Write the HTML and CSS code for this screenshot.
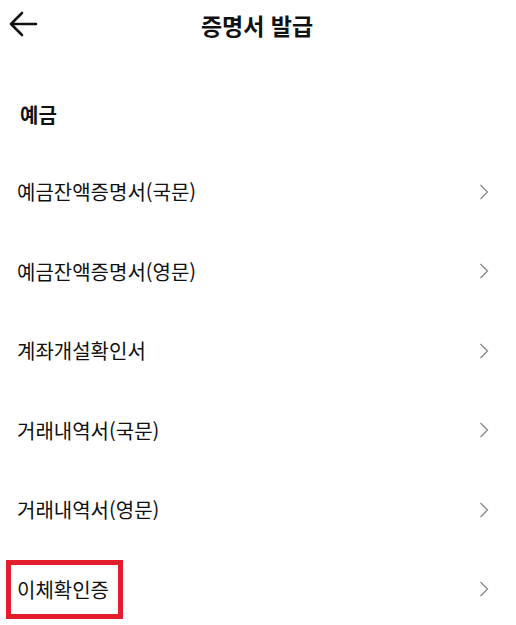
FILE: index.html
```html
<!DOCTYPE html>
<html lang="ko">
<head>
    <meta charset="UTF-8">
    <meta name="viewport" content="width=device-width, initial-scale=1.0">
    <title>증명서 발급</title>
    <link rel="stylesheet" href="styles.css">
</head>
<body>
    <header class="topbar">
        <button class="back-btn" aria-label="뒤로">
            <svg width="30" height="28" viewBox="0 0 30 28">
                <path d="M28 14H3M14 3L3 14L14 25" fill="none" stroke="#111" stroke-width="2.6" stroke-linecap="round" stroke-linejoin="round"/>
            </svg>
        </button>
        <h1 class="title">증명서 발급</h1>
    </header>

    <section class="group">
        <h2 class="group-title">예금</h2>
        <ul class="menu">
            <li class="menu-item">
                <span class="label">예금잔액증명서(국문)</span>
                <svg class="chevron" width="10" height="16" viewBox="0 0 10 16"><polyline points="1.5,1 8.5,8 1.5,15"/></svg>
            </li>
            <li class="menu-item">
                <span class="label">예금잔액증명서(영문)</span>
                <svg class="chevron" width="10" height="16" viewBox="0 0 10 16"><polyline points="1.5,1 8.5,8 1.5,15"/></svg>
            </li>
            <li class="menu-item">
                <span class="label">계좌개설확인서</span>
                <svg class="chevron" width="10" height="16" viewBox="0 0 10 16"><polyline points="1.5,1 8.5,8 1.5,15"/></svg>
            </li>
            <li class="menu-item">
                <span class="label">거래내역서(국문)</span>
                <svg class="chevron" width="10" height="16" viewBox="0 0 10 16"><polyline points="1.5,1 8.5,8 1.5,15"/></svg>
            </li>
            <li class="menu-item">
                <span class="label">거래내역서(영문)</span>
                <svg class="chevron" width="10" height="16" viewBox="0 0 10 16"><polyline points="1.5,1 8.5,8 1.5,15"/></svg>
            </li>
            <li class="menu-item">
                <span class="label highlight">이체확인증</span>
                <svg class="chevron" width="10" height="16" viewBox="0 0 10 16"><polyline points="1.5,1 8.5,8 1.5,15"/></svg>
            </li>
        </ul>
    </section>
</body>
</html>
```

FILE: styles.css
```css
body {
    margin: 0;
    background-color: #fff;
    color: #111;
    font-family: "Noto Sans CJK KR", "Noto Sans", sans-serif;
}

.topbar {
    height: 50px;
    display: flex;
    align-items: center;
    justify-content: center;
    position: relative;
}

.back-btn {
    position: absolute;
    left: 8px;
    top: 10px;
    padding: 0;
    border: none;
    background: none;
    line-height: 0;
}

.title {
    margin: 0 0 0 -2px;
    font-size: 23px;
    font-weight: 700;
    line-height: 30px;
}

.group-title {
    margin: 50px 0 22px 20px;
    font-size: 20px;
    font-weight: 700;
    line-height: 30px;
}

.menu {
    list-style: none;
    margin: 0;
    padding: 0;
}

.menu-item {
    height: 79.5px;
    display: flex;
    align-items: center;
    justify-content: space-between;
    padding: 0 27px 0 17px;
    font-size: 20px;
}

.label {
    position: relative;
}

.chevron {
    fill: none;
    stroke: #888;
    stroke-width: 1.3;
}

.highlight::after {
    content: "";
    position: absolute;
    left: -11px;
    right: -14px;
    top: -15px;
    bottom: -15px;
    border: 5px solid #e31d2b;
}
```
